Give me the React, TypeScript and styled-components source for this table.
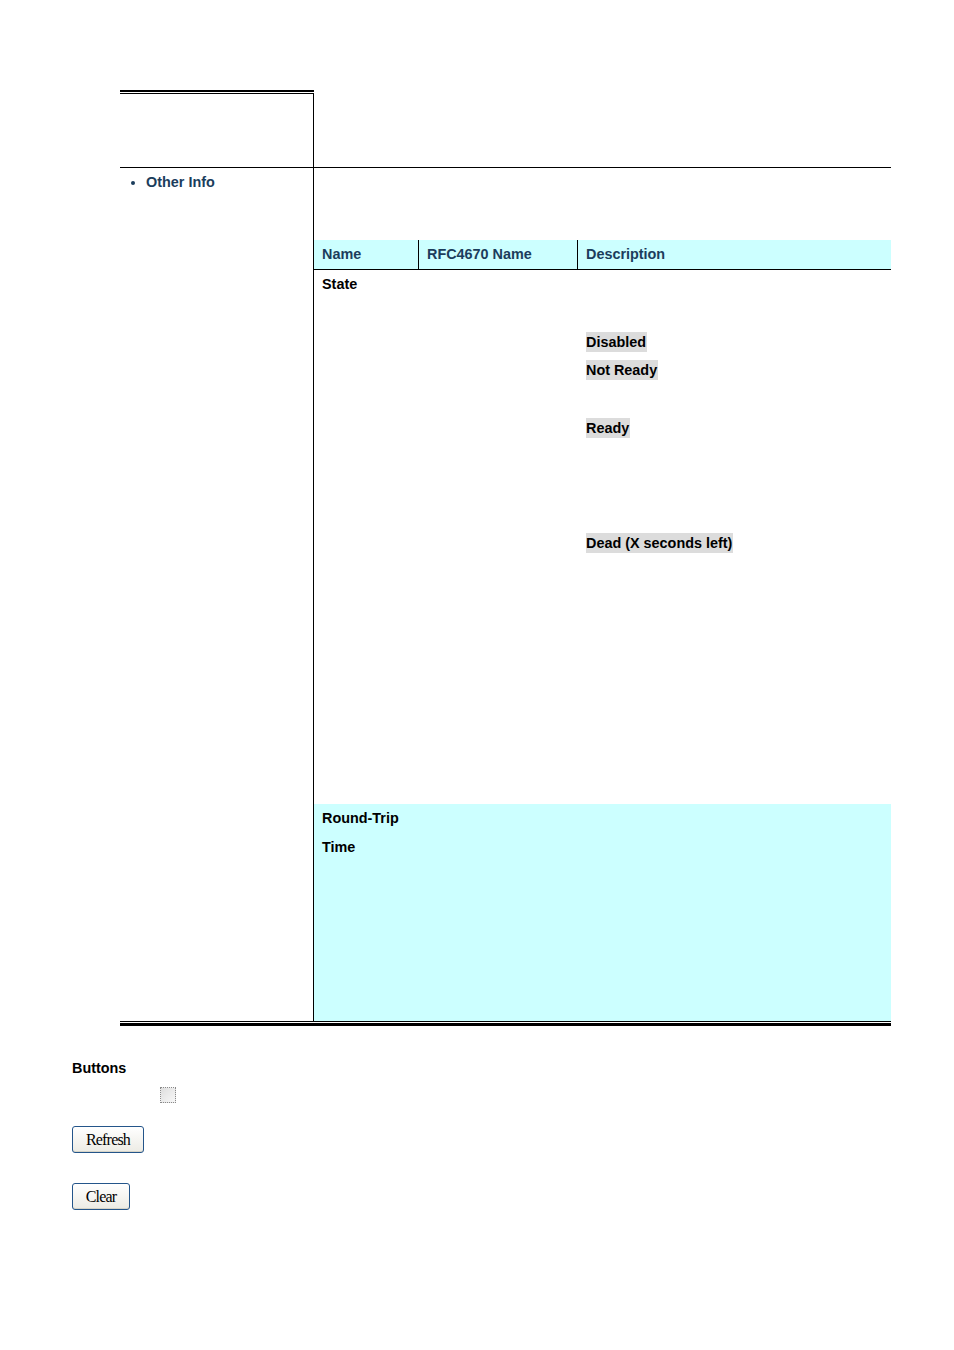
import React from "react";
import styled, { createGlobalStyle } from "styled-components";

const Global = createGlobalStyle`
  html, body { margin: 0; padding: 0; background: #ffffff; }
  body { font-family: "Liberation Sans", Arial, sans-serif; color: #000; }
`;

const Page = styled.div`
  padding-top: 90px;
  padding-bottom: 140px;
`;

const Frame = styled.div`
  margin-left: 120px;
  width: 771px;
`;

const TopRule = styled.div`
  width: 194px;
  height: 1px;
  border-top: 2px solid #000;
  border-bottom: 1px solid #000;
`;

const Row = styled.div<{ $h: number; $divider?: boolean }>`
  display: flex;
  height: ${(p) => p.$h}px;
  border-bottom: ${(p) => (p.$divider ? "1px solid #000" : "none")};
`;

const LeftCell = styled.div`
  width: 193px;
  flex: none;
  border-right: 1px solid #000;
  box-sizing: content-box;
`;

const RightCell = styled.div<{ $padTop?: number }>`
  flex: 1;
  padding-top: ${(p) => p.$padTop ?? 0}px;
  display: flex;
  flex-direction: column;
`;

const NavList = styled.ul`
  margin: 0;
  padding: 5px 0 0 26px;
  list-style: disc;
  color: #1b3d5c;
  font-size: 14.4px;
  font-weight: bold;
  line-height: 18px;
`;

const Table = styled.div`
  display: flex;
  flex-direction: column;
`;

const Grid = styled.div<{ $h: number; $bg: string; $border?: boolean }>`
  display: grid;
  grid-template-columns: 105px 159px 1fr;
  height: ${(p) => p.$h}px;
  background: ${(p) => p.$bg};
  border-bottom: ${(p) => (p.$border ? "1px solid #000" : "none")};
`;

const HeadCell = styled.div<{ $sep?: boolean }>`
  padding-left: 8px;
  border-right: ${(p) => (p.$sep ? "1px solid #000" : "none")};
  color: #1b3d5c;
  font-size: 14.4px;
  font-weight: bold;
  line-height: 29px;
`;

const BodyCell = styled.div`
  padding-left: 8px;
  font-size: 14.4px;
  font-weight: bold;
  line-height: 28.8px;
  color: #000;
`;

const Line = styled.div`
  height: 28.8px;
  line-height: 28.8px;
  white-space: nowrap;
`;

const Mark = styled.span`
  background: #dcdcdc;
  padding: 2px 1px 2px 0;
  line-height: 18px;
`;

const BottomRule = styled.div`
  height: 1px;
  border-top: 1px solid #000;
  border-bottom: 3px solid #000;
`;

const Section = styled.div`
  padding-left: 72px;
  display: flex;
  flex-direction: column;
  align-items: flex-start;
`;

const SectionTitle = styled.div`
  margin-top: 33px;
  font-size: 14.4px;
  font-weight: bold;
  line-height: 18px;
`;

const Check = styled.input`
  appearance: none;
  -webkit-appearance: none;
  margin: 10px 0 0 88px;
  width: 16px;
  height: 16px;
  box-sizing: border-box;
  border: 1px dotted #8a8a8a;
  background: linear-gradient(135deg, #dedede, #f7f7f7);
`;

const Btn = styled.button<{ $w: number; $mt: number }>`
  margin-top: ${(p) => p.$mt}px;
  width: ${(p) => p.$w}px;
  height: 27px;
  padding: 0;
  border: 1px solid #24558a;
  border-radius: 3px;
  background: linear-gradient(#ffffff, #ecebe4);
  box-shadow: inset 0 -1px 0 #d6d4c8;
  font-family: "Liberation Serif", "Times New Roman", serif;
  font-size: 16px;
  letter-spacing: -0.8px;
  color: #000;
`;

const descLines: (string | null)[] = [
  null,
  null,
  "Disabled",
  "Not Ready",
  null,
  "Ready",
  null,
  null,
  null,
  "Dead (X seconds left)",
];

export default function App() {
  return (
    <>
      <Global />
      <Page>
        <Frame>
          <TopRule />
          <Row $h={73} $divider>
            <LeftCell />
            <RightCell />
          </Row>
          <Row $h={853}>
            <LeftCell>
              <NavList>
                <li>Other Info</li>
              </NavList>
            </LeftCell>
            <RightCell $padTop={72}>
              <Table>
                <Grid $h={29} $bg="#ccffff" $border>
                  <HeadCell $sep>Name</HeadCell>
                  <HeadCell $sep>RFC4670 Name</HeadCell>
                  <HeadCell>Description</HeadCell>
                </Grid>
                <Grid $h={534} $bg="#ffffff">
                  <BodyCell>
                    <Line>State</Line>
                  </BodyCell>
                  <BodyCell />
                  <BodyCell>
                    {descLines.map((t, i) => (
                      <Line key={i}>{t ? <Mark>{t}</Mark> : "\u00a0"}</Line>
                    ))}
                  </BodyCell>
                </Grid>
                <Grid $h={217} $bg="#ccffff">
                  <BodyCell>
                    <Line>Round-Trip</Line>
                    <Line>Time</Line>
                  </BodyCell>
                  <BodyCell />
                  <BodyCell />
                </Grid>
              </Table>
            </RightCell>
          </Row>
          <BottomRule />
        </Frame>
        <Section>
          <SectionTitle>Buttons</SectionTitle>
          <Check type="checkbox" disabled />
          <Btn $w={72} $mt={23}>Refresh</Btn>
          <Btn $w={58} $mt={30}>Clear</Btn>
        </Section>
      </Page>
    </>
  );
}
